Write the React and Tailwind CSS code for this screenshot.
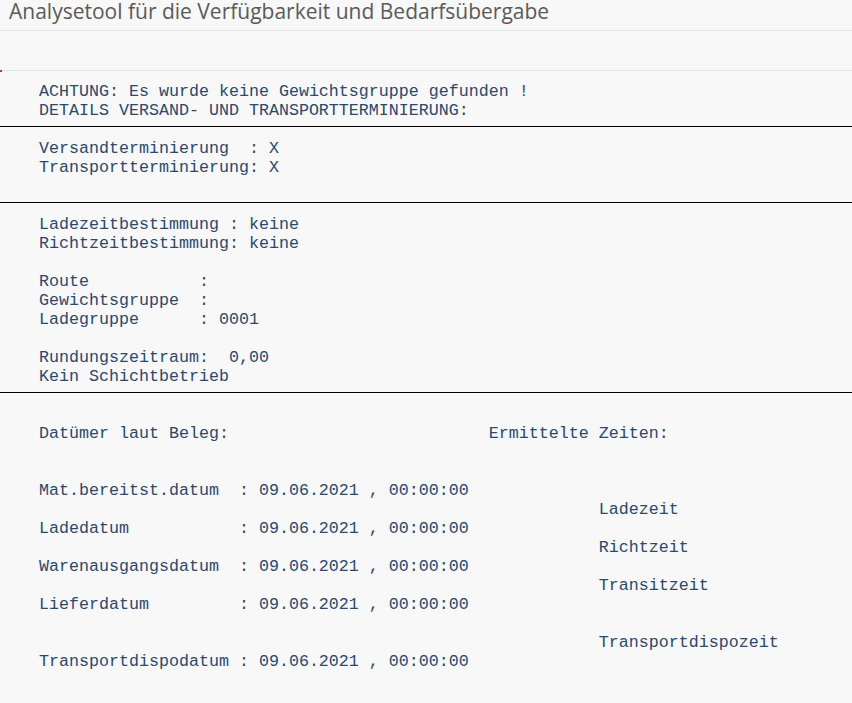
const mono = { fontFamily: '"Liberation Mono", "Courier New", monospace' };

const rows = [
  { t: 'ACHTUNG: Es wurde keine Gewichtsgruppe gefunden !' },
  { t: 'DETAILS VERSAND- UND TRANSPORTTERMINIERUNG:' },
  { hr: true },
  { t: 'Versandterminierung  : X' },
  { t: 'Transportterminierung: X' },
  { t: '' },
  { hr: true },
  { t: 'Ladezeitbestimmung : keine' },
  { t: 'Richtzeitbestimmung: keine' },
  { t: '' },
  { t: 'Route           :' },
  { t: 'Gewichtsgruppe  :' },
  { t: 'Ladegruppe      : 0001' },
  { t: '' },
  { t: 'Rundungszeitraum:  0,00' },
  { t: 'Kein Schichtbetrieb' },
  { hr: true },
  { t: '' },
  { t: 'Datümer laut Beleg:                          Ermittelte Zeiten:' },
  { t: '' },
  { t: '' },
  { t: 'Mat.bereitst.datum  : 09.06.2021 , 00:00:00' },
  { t: '                                                        Ladezeit' },
  { t: 'Ladedatum           : 09.06.2021 , 00:00:00' },
  { t: '                                                        Richtzeit' },
  { t: 'Warenausgangsdatum  : 09.06.2021 , 00:00:00' },
  { t: '                                                        Transitzeit' },
  { t: 'Lieferdatum         : 09.06.2021 , 00:00:00' },
  { t: '' },
  { t: '                                                        Transportdispozeit' },
  { t: 'Transportdispodatum : 09.06.2021 , 00:00:00' },
];

export default function App() {
  return (
    <div className="w-[852px] h-[703px] overflow-hidden bg-[#f8f8f8]">
      {/* title bar */}
      <div className="h-[31px] border-b border-[#e2e2e2] pl-[9px]">
        <h1
          className="text-[21px] leading-[23px] text-[#5a5a5a]"
          style={{ fontFamily: '"Open Sans", "Liberation Sans", Arial, sans-serif' }}
        >
          Analysetool für die Verfügbarkeit und Bedarfsübergabe
        </h1>
      </div>

      {/* empty toolbar */}
      <div className="h-[40px] border-b border-[#e2e2e2] relative">
        <span className="absolute left-0 -bottom-[2px] w-[2px] h-[2px] bg-[#c0392b]" />
      </div>

      {/* list output */}
      <div className="pt-[11px] text-[16.67px] text-[#29496f]" style={mono}>
        {rows.map((r, i) =>
          r.hr ? (
            <div key={i} className="h-[19px] pt-[6px]">
              <div className="h-px bg-black" />
            </div>
          ) : (
            <div key={i} className="h-[19px] leading-[19px] pl-[39px] whitespace-pre">
              {r.t}
            </div>
          )
        )}
      </div>
    </div>
  );
}
